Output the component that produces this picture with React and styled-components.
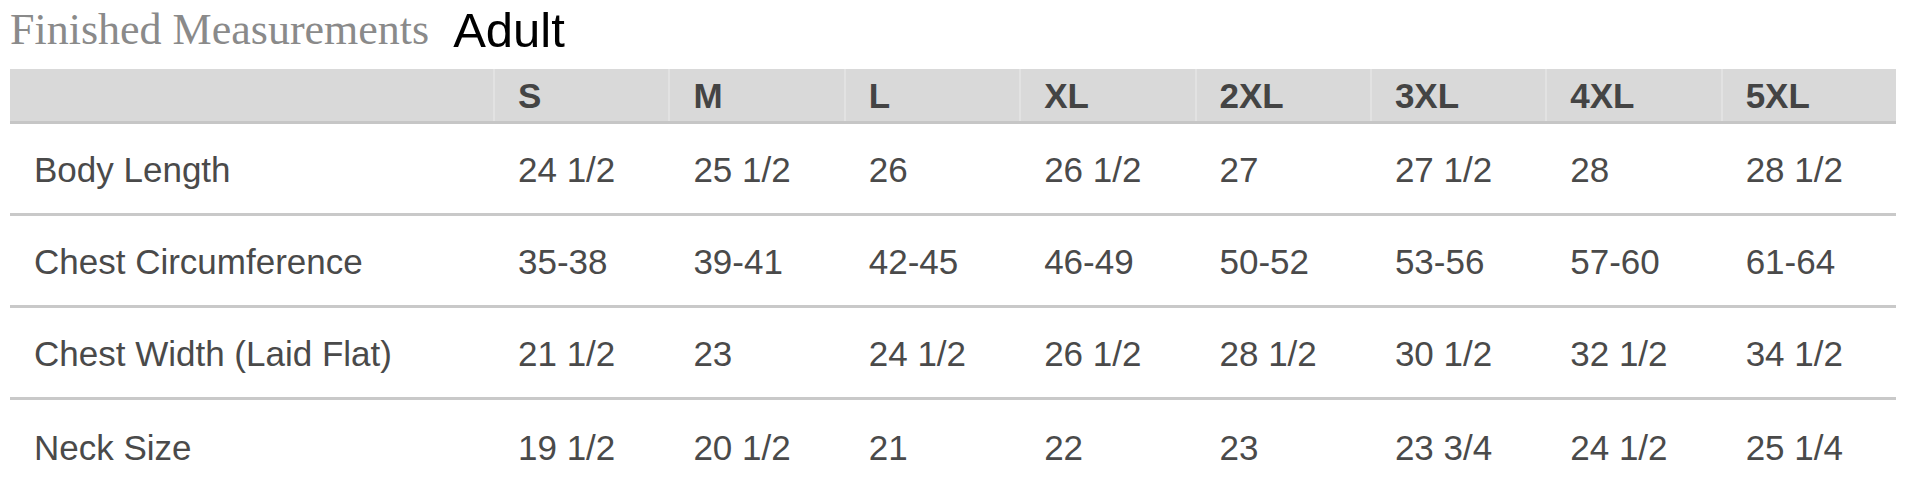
import React from "react";
import styled, { createGlobalStyle } from "styled-components";

const sizes = ["S", "M", "L", "XL", "2XL", "3XL", "4XL", "5XL"];

const rows = [
  { label: "Body Length", values: ["24 1/2", "25 1/2", "26", "26 1/2", "27", "27 1/2", "28", "28 1/2"] },
  { label: "Chest Circumference", values: ["35-38", "39-41", "42-45", "46-49", "50-52", "53-56", "57-60", "61-64"] },
  { label: "Chest Width (Laid Flat)", values: ["21 1/2", "23", "24 1/2", "26 1/2", "28 1/2", "30 1/2", "32 1/2", "34 1/2"] },
  { label: "Neck Size", values: ["19 1/2", "20 1/2", "21", "22", "23", "23 3/4", "24 1/2", "25 1/4"] },
];

export default function App() {
  return (
    <>
      <GlobalStyle />
      <Page>
        <TitleRow>
          <Title>Finished Measurements</Title>
          <Subtitle>Adult</Subtitle>
        </TitleRow>
        <Chart>
          <HeadRow>
            <HeadCell />
            {sizes.map((s) => (
              <HeadCell key={s}>{s}</HeadCell>
            ))}
          </HeadRow>
          {rows.map((row, i) => (
            <Row key={row.label} $last={i === rows.length - 1}>
              <Cell $first>{row.label}</Cell>
              {row.values.map((v, j) => (
                <Cell key={j}>{v}</Cell>
              ))}
            </Row>
          ))}
        </Chart>
      </Page>
    </>
  );
}

const GlobalStyle = createGlobalStyle`
  body {
    margin: 0;
    background: #ffffff;
  }
`;

const Page = styled.div`
  padding: 0 16px 0 10px;
`;

const TitleRow = styled.div`
  display: flex;
  align-items: flex-start;
  height: 69px;
  padding-top: 6px;
  box-sizing: border-box;
  line-height: 1;
`;

const Title = styled.h2`
  margin: 2px 0 0;
  font-family: "Liberation Serif", "Times New Roman", serif;
  font-weight: normal;
  font-size: 44px;
  color: #8a8a8a;
`;

const Subtitle = styled.span`
  margin-left: 24px;
  font-family: "Liberation Sans", Arial, sans-serif;
  font-size: 49px;
  color: #000000;
`;

const Chart = styled.div`
  font-family: "Liberation Sans", Arial, sans-serif;
  font-size: 35px;
  color: #4a4a4a;
`;

const grid = `
  display: grid;
  grid-template-columns: 483px repeat(8, 1fr);
`;

const HeadRow = styled.div`
  ${grid}
  height: 55px;
  background: #d9d9d9;
  border-bottom: 3px solid #c6c6c6;
  box-sizing: border-box;
`;

const HeadCell = styled.div`
  display: flex;
  align-items: center;
  padding: 2px 23px 0;
  font-weight: bold;
  color: #444444;
  & + & {
    border-left: 2px solid #e2e2e2;
  }
`;

const Row = styled.div`
  ${grid}
  height: 92px;
  box-sizing: border-box;
  border-bottom: ${(p) => (p.$last ? "none" : "3px solid #c9c9c9")};
`;

const Cell = styled.div`
  display: flex;
  align-items: center;
  padding: 3px 0 0 ${(p) => (p.$first ? 24 : 25)}px;
`;
